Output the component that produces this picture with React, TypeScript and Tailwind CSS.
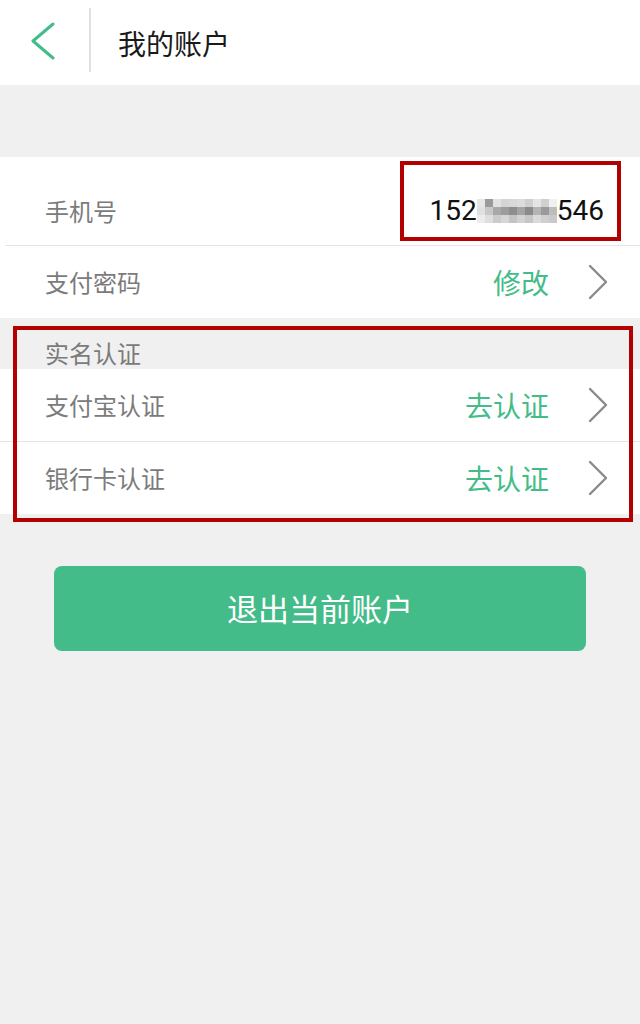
import React from 'react';

const cjk = { fontFamily: '"Noto Sans CJK SC", "Noto Sans", sans-serif' };

// pixelated mosaic that hides the middle digits of the phone number
const mosaic = [
  ['#e6e6e6', '#9a9a9a', '#e2e2e2', '#d4d4d4', '#d8d8d8', '#dcdcdc', '#cfcfcf', '#e4e4e4', '#d0d0d0', '#f0f0f0'],
  ['#e0e0e0', '#c8c8c8', '#a8a8a8', '#9c9c9c', '#8e8e8e', '#a4a4a4', '#8a8a8a', '#b4b4b4', '#9a9a9a', '#bdbdbd'],
  ['#ececec', '#dedede', '#cbcbcb', '#d6d6d6', '#c4c4c4', '#d2d2d2', '#c6c6c6', '#dadada', '#cfcfcf', '#c9c9c9'],
];

function Chevron() {
  return (
    <svg width="22" height="36" viewBox="0 0 22 36" fill="none">
      <path d="M3 2 L19 18 L3 34" stroke="#8a8a8a" strokeWidth="2.4" strokeLinecap="round" strokeLinejoin="round" />
    </svg>
  );
}

function LinkRow({ label, action }: { label: string; action: string }) {
  return (
    <div className="flex h-[72px] items-center bg-white pl-[45px] pr-[31px]">
      <span className="flex-1 text-[24px] text-[#7b7b7b]">{label}</span>
      <span className="mr-[38px] text-[28px] text-[#43bc89]">{action}</span>
      <Chevron />
    </div>
  );
}

export default function App() {
  return (
    <div className="relative min-h-[1024px] w-[640px] bg-[#f0f0f0]" style={cjk}>
      <header className="flex h-[85px] items-center bg-white">
        <div className="flex w-[89px] justify-center pr-[4px] pb-[4px]">
          <svg width="27" height="38" viewBox="0 0 27 38" fill="none">
            <path d="M24 2 L4 19 L24 36" stroke="#43bc89" strokeWidth="3" strokeLinecap="round" strokeLinejoin="round" />
          </svg>
        </div>
        <div className="h-[64px] w-[2px] self-start mt-[8px] bg-[#e0e0e0]" />
        <h1 className="ml-[27px] text-[28px] text-[#1a1a1a]">我的账户</h1>
      </header>

      <div className="h-[72px]" />

      <section className="bg-white">
        <div className="flex h-[88px] items-center pl-[45px] pr-[36px] pt-[20px]">
          <span className="flex-1 text-[24px] text-[#7b7b7b]">手机号</span>
          <span className="flex items-center text-[28px] text-[#111]" style={{ fontFamily: 'Roboto, "Liberation Sans", sans-serif' }}>
            152
            <span className="flex flex-col">
              {mosaic.map((row, i) => (
                <span key={i} className="flex">
                  {row.map((c, j) => (
                    <span key={j} className="h-[8px] w-[8px]" style={{ backgroundColor: c }} />
                  ))}
                </span>
              ))}
            </span>
            546
          </span>
        </div>
        <div className="ml-[5px] h-px bg-[#e4e4e4]" />
        <LinkRow label="支付密码" action="修改" />
      </section>

      <div className="h-[51px] pl-[45px] pt-[21px] text-[24px] leading-[28px] text-[#7b7b7b]">实名认证</div>

      <section>
        <LinkRow label="支付宝认证" action="去认证" />
        <div className="h-px bg-[#e4e4e4]" />
        <LinkRow label="银行卡认证" action="去认证" />
      </section>

      <div className="mx-[54px] mt-[52px] flex h-[85px] items-center justify-center rounded-[8px] bg-[#43bc89] text-[31px] text-white">
        退出当前账户
      </div>

      {/* red annotation frames */}
      <div className="absolute left-[400px] top-[161px] h-[80px] w-[221px] border-[4px] border-[#b30000]" />
      <div className="absolute left-[13px] top-[326px] h-[196px] w-[620px] border-[4px] border-[#b30000]" />
    </div>
  );
}
